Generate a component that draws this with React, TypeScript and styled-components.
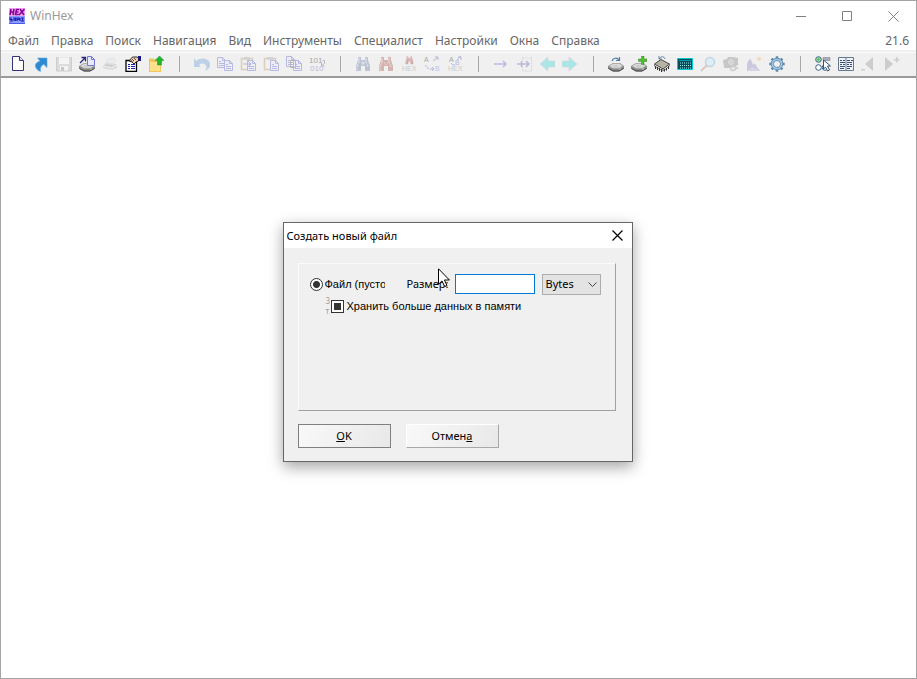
import React from "react";
import styled, { createGlobalStyle, css } from "styled-components";

const ui = '"Noto Sans", "Open Sans", sans-serif';

const GlobalStyle = createGlobalStyle`
  *, *::before, *::after { box-sizing: border-box; }
  body { margin: 0; background: #fff; font-family: ${ui}; }
  button, input, select { font: inherit; color: inherit; margin: 0; }
`;

const Window = styled.div`
  position: relative;
  display: flex;
  flex-direction: column;
  min-height: 100vh;
  border: 1px solid #a4a4a4;
  background: #fff;
  overflow: hidden;
`;

const TitleBar = styled.header`
  display: flex;
  align-items: center;
  height: 30px;
  padding-left: 8px;
`;

const Title = styled.h1`
  flex: 1;
  margin: 0 0 0 5px;
  font-size: 12px;
  line-height: 16px;
  font-weight: 400;
  color: #999;
`;

const CaptionButton = styled.button`
  display: flex;
  align-items: center;
  justify-content: center;
  width: 46px;
  height: 30px;
  padding: 0;
  border: 0;
  background: transparent;
  color: #808080;
`;

const MenuBar = styled.nav`
  display: flex;
  align-items: center;
  height: 19px;
  padding: 0 7px;
  gap: 12px;
  font-size: 12px;
  line-height: 16px;
  color: #666;
`;

const MenuItem = styled.button`
  padding: 0;
  border: 0;
  background: transparent;
  white-space: nowrap;
`;

const Version = styled.span`
  margin-left: auto;
`;

const ToolBar = styled.div`
  display: flex;
  align-items: center;
  height: 28px;
  padding: 2px 0 0 5px;
  background: linear-gradient(#f0f0f0 2px, #fafafa 2px, #fafafa 3px, #f0f0f0 3px);
  border-bottom: 2px solid #9a9a9a;
`;

const ToolButton = styled.button<{ $dim?: boolean }>`
  display: flex;
  flex: none;
  align-items: center;
  justify-content: center;
  width: 23px;
  height: 24px;
  padding: 0;
  border: 0;
  background: transparent;
  opacity: ${(p) => (p.$dim ? 0.33 : 1)};
`;

const Divider = styled.span`
  flex: none;
  width: 1px;
  height: 16px;
  margin: 0 10px 0 12px;
  background: #a8a8a8;
`;

const Workspace = styled.main`
  flex: 1;
  background: #fff;
`;

const Overlay = styled.div`
  position: absolute;
  inset: 0;
  display: grid;
  place-items: center;
  padding: 5px 2px 0 0;
`;

const Dialog = styled.form`
  position: relative;
  width: 350px;
  border: 1px solid #666;
  background: #f0f0f0;
  box-shadow: 0 5px 14px rgba(0, 0, 0, 0.36);
  font-size: 11px;
  line-height: 16px;
  color: #000;
`;

const DialogTitle = styled.div`
  display: flex;
  align-items: center;
  justify-content: space-between;
  height: 25px;
  padding-left: 3px;
  background: #fff;

  h2 {
    margin: 0;
    font-size: 11px;
    font-weight: 400;
  }
`;

const CloseButton = styled.button`
  display: flex;
  align-items: center;
  justify-content: center;
  width: 29px;
  height: 25px;
  padding: 0;
  border: 0;
  background: transparent;
`;

const DialogBody = styled.div`
  padding: 15px 16px 13px 14px;
`;

const Group = styled.fieldset`
  min-width: 0;
  height: 148px;
  margin: 0 0 13px;
  padding: 9px 14px 0 11px;
  border: 1px solid #a0a0a0;
  border-top-color: #fafafa;
  border-left-color: #fafafa;
`;

const FieldRow = styled.div`
  display: flex;
  align-items: center;
  height: 22px;
`;

const fieldText = css`
  font-family: "Liberation Sans", Arial, sans-serif;
  font-size: 11px;
  line-height: 14px;
  white-space: nowrap;
`;

const ClippedLabel = styled.label`
  ${fieldText}
  width: 60px;
  margin-left: 2px;
  overflow: hidden;
`;

const SizeLabel = styled.label`
  width: 48px;
  margin-left: 22px;
  font-size: 11px;
`;

const Radio = styled.input`
  appearance: none;
  flex: none;
  width: 13px;
  height: 13px;
  border: 1px solid #333;
  border-radius: 50%;
  background: radial-gradient(circle, #333 3px, #fff 4px);
`;

const CheckBox = styled.input`
  appearance: none;
  flex: none;
  width: 13px;
  height: 13px;
  padding: 2px;
  border: 1px solid #333;
  background: #333 content-box;
  box-shadow: inset 0 0 0 2px #fff;
`;

const SizeInput = styled.input`
  width: 80px;
  height: 20px;
  padding: 0 4px;
  border: 1px solid #0078d7;
  background: #fff;
  outline: none;
`;

const SelectWrap = styled.span`
  position: relative;
  display: flex;
  margin-left: 7px;

  svg {
    position: absolute;
    right: 4px;
    top: 8px;
    pointer-events: none;
  }
`;

const UnitSelect = styled.select`
  appearance: none;
  width: 59px;
  height: 21px;
  padding: 0 3px;
  border: 1px solid #adadad;
  border-radius: 0;
  background: #e3e3e3;
`;

const OptionRow = styled.div`
  display: flex;
  align-items: center;
  height: 22px;
  padding-left: 16px;
`;

const Marks = styled.span`
  display: flex;
  flex-direction: column;
  width: 5px;
  font-size: 8px;
  line-height: 10px;
  color: #a0a0a0;
`;

const MemoryLabel = styled.label`
  ${fieldText}
  margin-left: 3px;
`;

const Actions = styled.div`
  display: flex;
  gap: 15px;
`;

const ActionButton = styled.button<{ $primary?: boolean }>`
  width: 93px;
  height: 24px;
  padding: 0;
  border: 1px solid;
  border-color: ${(p) => (p.$primary ? "#808080" : "#fff #a8a8a8 #a8a8a8 #fff")};
  background: linear-gradient(120deg, #f9f9f9, #e8e8e8);
`;

const Pointer = styled.svg`
  position: absolute;
  left: 154px;
  top: 45px;
  pointer-events: none;
`;

type IconProps = { children: React.ReactNode };
const Icon = ({ children }: IconProps) => (
  <svg width="16" height="16" viewBox="0 0 16 16" fill="none" aria-hidden="true">
    {children}
  </svg>
);

const Page = ({ x, y }: { x: number; y: number }) => (
  <g transform={`translate(${x} ${y})`}>
    <path d="M.5.5h5l3 3v7h-8z" fill="#e8ecff" stroke="#4a4ad0" />
    <path d="M5.5.5v3h3M2 4.5h2M2 6.5h5M2 8.5h5" stroke="#4a4ad0" />
  </g>
);

const Clip = () => (
  <>
    <path d="M1.5 2.5h11v11h-11z" fill="#f8f2e4" stroke="#b08d58" strokeWidth="1.5" />
    <path d="M4 1h6v3H4z" fill="#999" />
  </>
);

const Bino = ({ color, light }: { color: string; light: string }) => (
  <>
    <path d="M3 1h3v3h4V1h3v3l2 6v5h-5v-5H6v5H1v-5l2-6z" fill={color} />
    <path d="M4 2v4l-2 5v3M11 2v4l2 5M7 6h2v2H7z" stroke={light} />
    <path d="M3 8h3M10 8h3M1 12h5M10 12h5" stroke="#444" strokeOpacity=".5" />
  </>
);

const Drive = () => (
  <>
    <path d="M0 10l5-3h7l4 3v2.500l-5 3H5l-5-3z" fill="#8a8a8a" />
    <path d="M1 10l4-2.500h6.500L15 10l-4 2.200H5z" fill="#dcdcdc" stroke="#aaa" strokeWidth=".7" />
    <path d="M.5 12.500l4.500 2.500h6l4.500-2.500" stroke="#444" />
    <path d="M5 10h5" stroke="#bbb" />
    <path d="M11 13h2" stroke="#b6d6a0" />
  </>
);

type SmallTextProps = { x: number; y: number; fill: string; size?: number; children: React.ReactNode };
const SmallText = ({ x, y, fill, size = 7, children }: SmallTextProps) => (
  <text x={x} y={y} fill={fill} fontFamily="Liberation Sans, sans-serif" fontSize={size}>
    {children}
  </text>
);

const Arrow = ({ flip }: { flip?: boolean }) => (
  <path
    d={flip ? "M16 5H9V1L1 8l8 7v-4h7z" : "M0 5h7V1l8 7-8 7v-4H0z"}
    fill="#22d3d3"
    stroke="#8aabb8"
    strokeWidth=".6"
  />
);

const teeth = [0, 45, 90, 135, 180, 225, 270, 315];

type Tool = { name: string; dim?: boolean; art: React.ReactNode };

const groups: Tool[][] = [
  [
    { name: "Создать", art: (<><path d="M2.500.500h7l4 4v10h-11z" fill="#fff" stroke="#34347c" /><path d="M9.500.500v4h4" fill="#dde" stroke="#34347c" /></>) },
    { name: "Открыть", art: (<path d="M4.500 2H14v9.500l-3.300-3.200C8 9.500 7 12 7.500 15.500 3 14 1 9.500 3.500 7 4.500 6 6 5.500 7 5z" fill="#2f8ad0" stroke="#5ba8e0" strokeWidth=".6" />) },
    { name: "Сохранить", dim: true, art: (<><path d="M.500 1h15v14h-15z" fill="#b4b4b4" /><path d="M3 1.500h10V8H3zM4 10h8v5H4z" fill="#fff" /><path d="M5 11h3v4H5z" fill="#777" /><path d="M.500 1v14h15V1" stroke="#888" /></>) },
    { name: "Открыть диск", art: (<><Drive /><path d="M8.500.500h4l3 3v6h-7z" fill="#e8e8ff" stroke="#7777d8" /><path d="M12.500.500v3h3" stroke="#7777d8" /><path d="M1 7l5-5M2.500 1.500h4v4" stroke="#24247c" strokeWidth="1.300" /></>) },
    { name: "Печать", dim: true, art: (<><path d="M1 10l4-4 6 1 4 2v3l-5 2-9-2z" fill="#aaa" /><path d="M5 3l6-1 3 2-3 4-7-1z" fill="#d6e4f4" stroke="#bbb" strokeWidth=".5" /><path d="M1 10l9 2 5-3" stroke="#eee" /><path d="M3 9l7 1" stroke="#777" /></>) },
    { name: "Свойства", art: (<><path d="M1 4.500h10.500v11H1z" fill="#fff" stroke="#000" strokeWidth="1.300" /><path d="M3 8.500h2M6 8.500h4M3 10.500h2M6 10.500h4M3 12.500h2M6 12.500h4" stroke="#2222b0" /><path d="M4 5l3.500-4H12l1.500 1v3L11 6 9 8 7 6z" fill="#efd0b4" stroke="#000" strokeWidth=".8" /><path d="M7 3l2 2M9 2l2 2M5.500 4.500l2 1" stroke="#000" strokeWidth=".6" /><path d="M13 0h3v5h-3z" fill="#181878" /></>) },
    { name: "Папка", art: (<><path d="M1 2.500h5l1.500 2H13V16H1z" fill="#edc85a" /><path d="M2 6h10v9H2z" fill="#ffe08a" /><path d="M11.500 0L16 4.500h-2.500V9h-4V4.500H7z" fill="#20b52d" stroke="#109020" strokeWidth=".5" /></>) },
  ],
  [
    { name: "Отменить", dim: true, art: (<path d="M0 2l2 3c5-4 12-3 14 2 1 4-2 7-5 8 2-3 2-6-1-7-2-1-4 0-5 1l2 2H0z" fill="#5b91cf" />) },
    { name: "Копировать", dim: true, art: (<><Page x={0} y={1} /><Page x={7} y={4} /></>) },
    { name: "Вставить", dim: true, art: (<><Clip /><Page x={7} y={4} /><path d="M3 8h8M8 5l3 3-3 3" stroke="#44a" /></>) },
    { name: "Буфер обмена", dim: true, art: (<><Clip /><Page x={7} y={4} /></>) },
    { name: "Копировать блок", dim: true, art: (<><Page x={0} y={0} /><Page x={7} y={4} /><path d="M4.500 4.500h5v7h-5z" stroke="#444" /></>) },
    { name: "Преобразовать", dim: true, art: (<><SmallText x={0} y={7} size={8} fill="#000">101</SmallText><SmallText x={1} y={15} size={8} fill="#4444c0">010</SmallText><path d="M13.500 4.500h2v3l-3 2M12.500 7v3h3" stroke="#555" /></>) },
  ],
  [
    { name: "Найти", dim: true, art: <Bino color="#5a6c9c" light="#bdd0ed" /> },
    { name: "Найти далее", dim: true, art: (<><Bino color="#a83a32" light="#efb1a7" /><path d="M7 4h2v4H7z" fill="#843" /></>) },
    { name: "Найти HEX", dim: true, art: (<><g transform="translate(4 0) scale(.55)"><Bino color="#902018" light="#d88" /></g><SmallText x={1} y={15} fill="#777">HEX</SmallText></>) },
    { name: "Заменить", dim: true, art: (<><SmallText x={0} y={6} fill="#000">A</SmallText><SmallText x={11} y={15} fill="#5555dd">B</SmallText><path d="M9 5l5-4M11 1h3v3M2 9v2M4 11v2M6 13h4M8 11l2 2-2 2" stroke="#4545b8" /></>) },
    { name: "Заменить HEX", dim: true, art: (<><SmallText x={2} y={6} fill="#000">A</SmallText><SmallText x={8} y={9} fill="#4444cc">B</SmallText><path d="M10 4l4-4M11 1h3v3M4 7l2 2h2" stroke="#4545b8" /><SmallText x={1} y={15} fill="#777">HEX</SmallText></>) },
  ],
  [
    { name: "Перейти", dim: true, art: <path d="M1 8h12M10 5l3 3-3 3" stroke="#5050c8" strokeWidth="1.500" /> },
    { name: "Перейти к блоку", dim: true, art: (<><path d="M6.500 1l2 2 2-2 2 2 3-2v14h-9z" stroke="#888" strokeDasharray="1 1" /><path d="M1 8h12M10 5l3 3-3 3M5.500 5v6" stroke="#5050a8" strokeWidth="1.500" /></>) },
    { name: "Назад", dim: true, art: <Arrow flip /> },
    { name: "Вперёд", dim: true, art: <Arrow /> },
  ],
  [
    { name: "Диск", art: (<><Drive /><path d="M4 5c1-3 5-4 7-1M11.500 1v3.500H8" stroke="#527aae" strokeWidth="1.200" /></>) },
    { name: "Добавить диск", art: (<><Drive /><path d="M10.500 0h2.500v3h3v2.500h-3v3h-2.500v-3h-3V3h3z" fill="#53bd36" stroke="#348820" strokeWidth=".5" /></>) },
    { name: "Память", art: (<><path d="M.500 8L7 3.500l8.500 4.500L9 13z" fill="#b6b4a7" stroke="#49483f" /><path d="M.500 8v2L9 15v-2M9 15l6.500-5V8" stroke="#777" /><path d="M1.500 10v3M3.500 11v3M5.500 12v3M7.500 13v3M10.500 13v2.500M12.500 12v2.500M14.500 10v3" stroke="#333" /><path d="M5 3c2-3 5-3 6 0M5 0v3h3" stroke="#6384a9" /></>) },
    { name: "Калькулятор", art: (<><path d="M1 3h14v11H1z" fill="#084858" /><path d="M.500 2.500h15v11H.500z" stroke="#00cbd1" /><path d="M2 4.500h12" stroke="#00a4b0" /><path d="M3 7h11M3 9.500h11M3 12h11" stroke="#9ff4f4" strokeDasharray="1 1" /></>) },
    { name: "Поиск на диске", dim: true, art: (<><circle cx="10" cy="6" r="4.500" fill="#b9ecff" stroke="#619fc6" strokeWidth="1.500" /><path d="M7 9l-6 6" stroke="#a98060" strokeWidth="2" /></>) },
    { name: "Снимок", dim: true, art: (<><path d="M0 4l4-1 1-2h5l5 1v7l-4 2-3 1H1z" fill="#777" /><circle cx="8" cy="6" r="2.500" fill="#999" stroke="#bbb" /><circle cx="10" cy="12" r="2.500" stroke="#888" strokeWidth="1.500" /><path d="M12 12h3" stroke="#888" strokeWidth="2" /></>) },
    { name: "Анализ", dim: true, art: (<><path d="M1 15V8c1-3 2-5 3-5s2 3 3 6c1-2 2-2 3 0 1 3 3 5 5 6z" fill="#7f78b8" /><path d="M1 15l5-4 9 4z" fill="#ad9bd2" /><circle cx="13" cy="3" r="2" fill="#fa5" /></>) },
    { name: "Настройки", art: (<><g stroke="#5f87a9" strokeWidth="2.600">{teeth.map((a) => (<path key={a} d="M8 .3V4" transform={`rotate(${a} 8 8)`} />))}</g><circle cx="8" cy="8" r="4.600" fill="#f0f0f0" stroke="#5f87a9" strokeWidth="3.200" /><circle cx="8" cy="8" r="4.600" stroke="#9cc5e6" strokeWidth="1.800" /></>) },
  ],
  [
    { name: "Выбор", art: (<><g stroke="#356187"><circle cx="3.500" cy="3.500" r="2.800" fill="#b4ecb0" /><circle cx="3.500" cy="11.500" r="2.800" fill="#fff" /><circle cx="10" cy="11.500" r="2.800" fill="#fff" /></g><circle cx="3.500" cy="3.500" r="1.200" fill="#3fb53a" /><path d="M8 1.500h7v3H8z" fill="#aab" stroke="#889" strokeWidth=".6" /><path d="M8.500 4v9l2-2 2 4 2-1-2-4h3z" fill="#fff" stroke="#345775" /></>) },
    { name: "Сравнить", art: (<><path d="M.500 1.500h15v13H.500z" fill="#edf2fb" stroke="#66788e" /><path d="M8 1v14" stroke="#66788e" /><path d="M2 4.500h2M5 4.500h2M2 6.500h5M2 8.500h2M5 8.500h2M2 10.500h5M2 12.500h4M9 4.500h3M13 4.500h2M9 6.500h5M9 8.500h2M12 8.500h2M9 10.500h5M9 12.500h3" stroke="#3c4f70" /></>) },
    { name: "Предыдущая", dim: true, art: (<path d="M12 1v14L4 8zM0 13h4v1.500H0z" fill="#888" />) },
    { name: "Следующая", dim: true, art: (<path d="M1 1v14l8-7zM10 3h2V1h1.500v2h2v1.500h-2v2H12v-2h-2z" fill="#888" />) },
  ],
];

const menus = ["Файл", "Правка", "Поиск", "Навигация", "Вид", "Инструменты", "Специалист", "Настройки", "Окна", "Справка"];

const Logo = () => (
  <svg width="16" height="16" viewBox="0 0 16 16" aria-hidden="true">
    <path fill="#f0a8f0" d="M0 0h16v8H0z" />
    <path fill="#8a9cff" d="M0 8h16v8H0z" />
    <path fill="none" stroke="#8a0098" strokeWidth="1.600" d="M2 1L1 7M5 1L4 7M1 4h4M10 1.500H7.500L6.500 6.500h3M7 4h2.500M11 1l4 6M15.500 1L10 7" />
    <path fill="none" stroke="#2020b8" strokeWidth="1.200" d="M3 10H1v1.500h2V13H1M5 13v-3h1.500v3M8 13v-3h2v1.500H8M11 10v3M12 10h3M13.500 10v3M12 13h3" />
    <path stroke="#4a5af0" d="M0 15.500h16" />
  </svg>
);

export default function App() {
  return (
    <Window>
      <GlobalStyle />
      <TitleBar>
        <Logo />
        <Title>WinHex</Title>
        <CaptionButton aria-label="Свернуть">
          <svg width="11" height="11"><path d="M0 5.500h10" stroke="currentColor" /></svg>
        </CaptionButton>
        <CaptionButton aria-label="Развернуть">
          <svg width="11" height="11"><path d="M.500.500h9v9h-9z" fill="none" stroke="currentColor" /></svg>
        </CaptionButton>
        <CaptionButton aria-label="Закрыть">
          <svg width="11" height="11"><path d="M.500.500l10 10M10.500.500l-10 10" stroke="currentColor" /></svg>
        </CaptionButton>
      </TitleBar>
      <MenuBar>
        {menus.map((m) => <MenuItem key={m}>{m}</MenuItem>)}
        <Version>21.6</Version>
      </MenuBar>
      <ToolBar role="toolbar">
        {groups.map((group, i) => (
          <React.Fragment key={i}>
            {i > 0 && <Divider />}
            {group.map((t) => (
              <ToolButton key={t.name} aria-label={t.name} $dim={t.dim}>
                <Icon>{t.art}</Icon>
              </ToolButton>
            ))}
          </React.Fragment>
        ))}
      </ToolBar>
      <Workspace />
      <Overlay>
        <Dialog role="dialog" aria-labelledby="dialog-title" onSubmit={(e) => e.preventDefault()}>
          <DialogTitle>
            <h2 id="dialog-title">Создать новый файл</h2>
            <CloseButton type="button" aria-label="Закрыть">
              <svg width="11" height="11"><path d="M.500.500l10 10M10.500.500l-10 10" stroke="#000" strokeWidth="1.200" /></svg>
            </CloseButton>
          </DialogTitle>
          <DialogBody>
            <Group>
              <FieldRow>
                <Radio type="radio" id="empty" name="kind" defaultChecked />
                <ClippedLabel htmlFor="empty">Файл (пусто</ClippedLabel>
                <SizeLabel htmlFor="size">Размер:</SizeLabel>
                <SizeInput id="size" type="text" />
                <SelectWrap>
                  <UnitSelect aria-label="Единица"><option>Bytes</option></UnitSelect>
                  <svg width="9" height="6"><path d="M.500.500l4 4 4-4" fill="none" stroke="#444" /></svg>
                </SelectWrap>
              </FieldRow>
              <OptionRow>
                <Marks><span>3</span><span>т</span></Marks>
                <CheckBox type="checkbox" id="memory" />
                <MemoryLabel htmlFor="memory">Хранить больше данных в памяти</MemoryLabel>
              </OptionRow>
            </Group>
            <Actions>
              <ActionButton type="submit" $primary><u>O</u>K</ActionButton>
              <ActionButton type="button">Отмен<u>а</u></ActionButton>
            </Actions>
          </DialogBody>
          <Pointer width="13" height="20" viewBox="0 0 13 20" aria-hidden="true">
            <path d="M.500.800v15.500l3.500-3.400 2.700 5.600 2.300-1-2.600-5.500h5z" fill="#fff" stroke="#000" />
          </Pointer>
        </Dialog>
      </Overlay>
    </Window>
  );
}
